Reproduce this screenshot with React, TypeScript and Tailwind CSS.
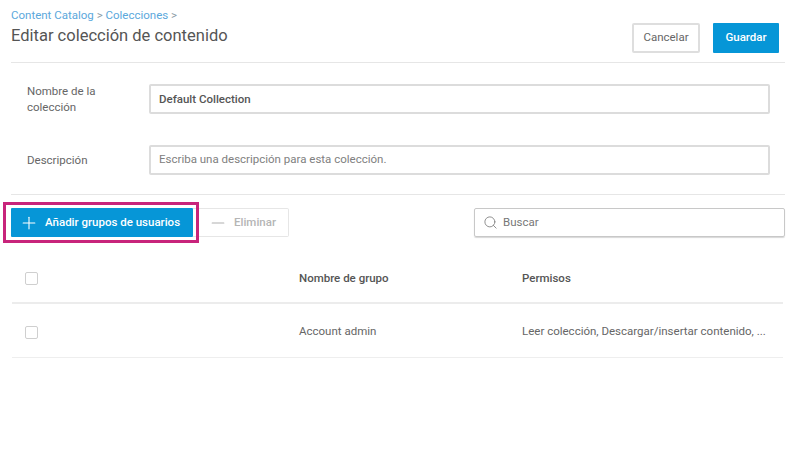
import { Plus, Minus, Search } from "lucide-react";

function Checkbox() {
  return <span className="block h-[13px] w-[13px] rounded-[2px] border border-[#cfcfcf] bg-white" />;
}

function FormRow({ label, children }: { label: React.ReactNode; children: React.ReactNode }) {
  return (
    <div className="flex items-center">
      <div className="w-[122px] text-[11.5px] leading-[16px] text-[#666666]">{label}</div>
      {children}
    </div>
  );
}

export default function App() {
  return (
    <div className="h-[449px] w-[798px] bg-white pl-[11px] pr-[13px] font-['Roboto',sans-serif] text-[#666666]">
      <header className="flex h-[63px] items-start justify-between border-b border-[#e6e6e6] pr-[6px] pt-[8px]">
        <div>
          <div className="text-[11.5px] leading-[15px] text-[#5ba8dc]">
            Content Catalog <span className="text-[#8a9aa5]">&gt;</span> Colecciones <span className="text-[#8a9aa5]">&gt;</span>
          </div>
          <h1 className="mt-[2px] text-[16.5px] leading-[22px] text-[#555555]">Editar colección de contenido</h1>
        </div>
        <div className="mt-[15px] flex gap-[13px]">
          <button className="h-[30px] w-[68px] rounded-[2px] border-2 border-[#dedede] bg-white text-[11.5px] text-[#666666]">Cancelar</button>
          <button className="h-[30px] w-[66px] rounded-[1px] bg-[#0696d7] text-[11.5px] font-medium text-white">Guardar</button>
        </div>
      </header>

      <section className="flex h-[132px] flex-col gap-[30px] border-b border-[#e6e6e6] pl-[16px] pr-[15px] pt-[20px]">
        <FormRow label={<>Nombre de la<br />colección</>}>
          <div className="flex h-[30px] flex-1 items-center rounded-[2px] border-2 border-[#dcdcdc] pl-[8px] pt-[2px] text-[11.5px] font-medium text-[#555555]">Default Collection</div>
        </FormRow>
        <FormRow label="Descripción">
          <div className="flex h-[30px] flex-1 items-center rounded-[2px] border-2 border-[#dcdcdc] pl-[8px] text-[11.5px] text-[#808080]">Escriba una descripción para esta colección.</div>
        </FormRow>
      </section>

      <section className="mt-[12px] flex h-[30px] items-center justify-between">
        <div className="flex items-center">
          <div className="relative">
            <button className="flex h-[29px] w-[182px] items-center rounded-[1px] bg-[#0696d7] pl-[8px] pt-px text-[11.5px] font-medium text-white">
              <Plus size={20} strokeWidth={1.3} className="mr-[6px]" />
              Añadir grupos de usuarios
            </button>
            <div className="absolute -bottom-[6px] -left-[8px] -right-[6px] -top-[6px] border-[3px] border-[#c8247b]" />
          </div>
          <button className="flex h-[29px] w-[96px] items-center rounded-r-[2px] border border-l-0 border-[#e6e6e6] pl-[15px] pt-px text-[11.5px] font-medium text-[#b5b5b5]">
            <Minus size={20} strokeWidth={1.3} className="mr-[6px] text-[#b0b0b0]" />
            Eliminar
          </button>
        </div>
        <div className="flex h-[29px] w-[311px] items-center rounded-[2px] border border-[#c8c8c8] pl-[8px] pt-px text-[11.5px] text-[#777777] shadow-[0_1px_1px_#d8d8d8]">
          <Search size={15} strokeWidth={1.4} className="mr-[5px] text-[#808080]" />
          Buscar
        </div>
      </section>

      <section className="ml-[1px] mr-[2px] mt-[20px]">
        <div className="flex h-[47px] items-center border-b-2 border-[#ececec] pb-[2px] text-[11.5px] font-medium text-[#555555]">
          <div className="w-[287px] pl-[13px]"><Checkbox /></div>
          <div className="w-[223px]">Nombre de grupo</div>
          <div>Permisos</div>
        </div>
        <div className="flex h-[54px] items-center border-b border-[#eeeeee] pt-[3px] text-[11.5px] text-[#666666]">
          <div className="w-[287px] pl-[13px]"><Checkbox /></div>
          <div className="w-[223px]">Account admin</div>
          <div>Leer colección, Descargar/insertar contenido, ...</div>
        </div>
      </section>
    </div>
  );
}
